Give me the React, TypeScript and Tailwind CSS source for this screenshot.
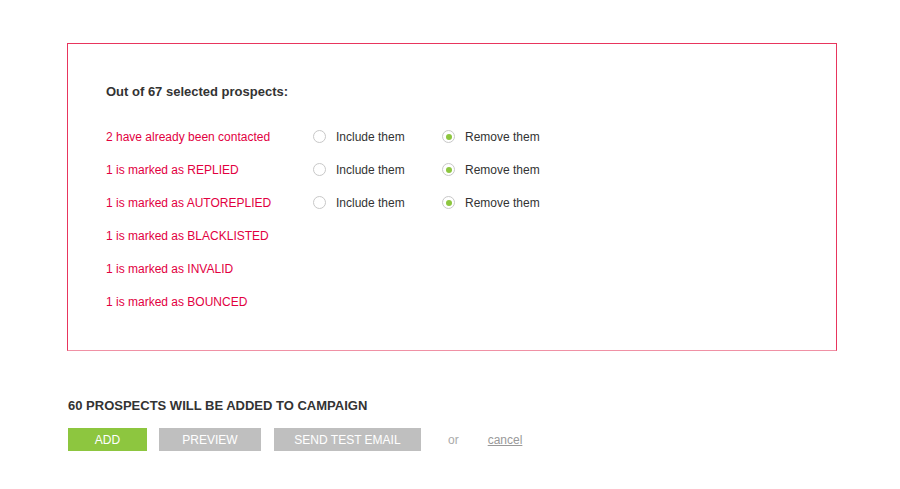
import React from "react";

function Radio({ checked }: { checked?: boolean }) {
  return (
    <span className="flex h-[13px] w-[13px] shrink-0 items-center justify-center rounded-full border border-[#c8c8c8] bg-white">
      {checked && <span className="h-[6px] w-[6px] rounded-full bg-[#8dc63f]" />}
    </span>
  );
}

const rows: { label: string; choice: boolean }[] = [
  { label: "2 have already been contacted", choice: true },
  { label: "1 is marked as REPLIED", choice: true },
  { label: "1 is marked as AUTOREPLIED", choice: true },
  { label: "1 is marked as BLACKLISTED", choice: false },
  { label: "1 is marked as INVALID", choice: false },
  { label: "1 is marked as BOUNCED", choice: false },
];

export default function App() {
  return (
    <div
      className="h-[489px] w-[900px] bg-white text-[#333]"
      style={{ fontFamily: '"Liberation Sans", Arial, sans-serif' }}
    >
      <div className="pl-[67px] pt-[43px]">
        <div className="flex h-[308px] w-[770px] flex-col border border-[#e8355d] border-b-[#f091a5] pl-[38px] pt-[40px]">
          <div className="h-[16px] text-[13px] font-bold leading-[16px] text-[#333]">
            Out of 67 selected prospects:
          </div>
          <div className="mt-[20px] flex flex-col">
            {rows.map((r) => (
              <div key={r.label} className="flex h-[33px] items-center text-[12px]">
                <div className="w-[207px] text-[#e2003f]">{r.label}</div>
                {r.choice && (
                  <>
                    <div className="flex w-[129px] items-center gap-[10px] text-[#333]">
                      <Radio />
                      <span>Include them</span>
                    </div>
                    <div className="flex items-center gap-[10px] text-[#333]">
                      <Radio checked />
                      <span>Remove them</span>
                    </div>
                  </>
                )}
              </div>
            ))}
          </div>
        </div>
      </div>
      <div className="pl-[68px] pt-[47px]">
        <div className="h-[16px] text-[13px] font-bold leading-[16px] text-[#333]">
          60 PROSPECTS WILL BE ADDED TO CAMPAIGN
        </div>
        <div className="mt-[14px] flex items-center text-[12px]">
          <button className="h-[23px] w-[79px] bg-[#8dc63f] text-white">ADD</button>
          <button className="ml-[12px] h-[23px] w-[102px] bg-[#bfbfbf] text-white">PREVIEW</button>
          <button className="ml-[13px] h-[23px] w-[147px] bg-[#bfbfbf] text-white">SEND TEST EMAIL</button>
          <span className="ml-[27px] text-[#aaa]">or</span>
          <a className="ml-[29px] text-[#999] underline" href="#">cancel</a>
        </div>
      </div>
    </div>
  );
}
